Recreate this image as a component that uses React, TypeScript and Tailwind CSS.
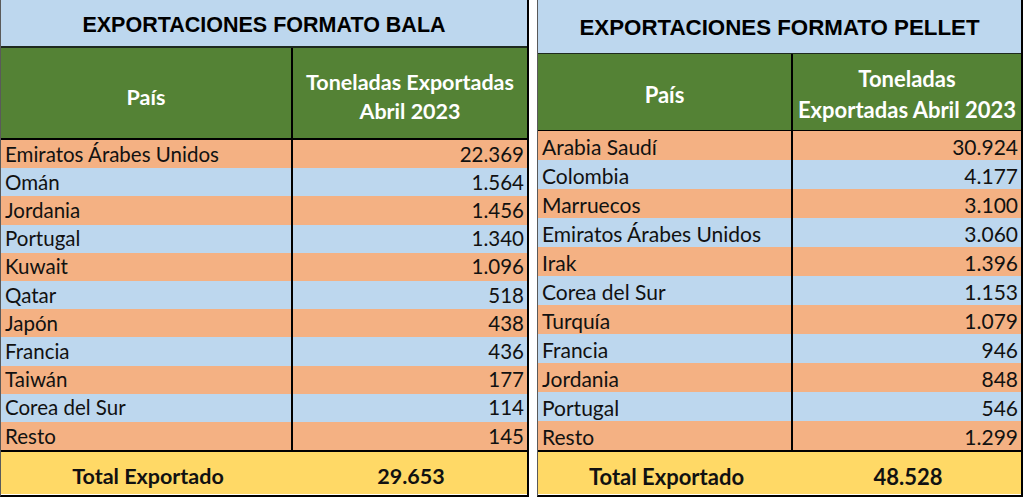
import React from "react";

type Row = [string, string];

const bala: Row[] = [
  ["Emiratos Árabes Unidos", "22.369"],
  ["Omán", "1.564"],
  ["Jordania", "1.456"],
  ["Portugal", "1.340"],
  ["Kuwait", "1.096"],
  ["Qatar", "518"],
  ["Japón", "438"],
  ["Francia", "436"],
  ["Taiwán", "177"],
  ["Corea del Sur", "114"],
  ["Resto", "145"],
];

const pellet: Row[] = [
  ["Arabia Saudí", "30.924"],
  ["Colombia", "4.177"],
  ["Marruecos", "3.100"],
  ["Emiratos Árabes Unidos", "3.060"],
  ["Irak", "1.396"],
  ["Corea del Sur", "1.153"],
  ["Turquía", "1.079"],
  ["Francia", "946"],
  ["Jordania", "848"],
  ["Portugal", "546"],
  ["Resto", "1.299"],
];

const cal = { fontFamily: "Lato, 'Open Sans', sans-serif" };
const arial = { fontFamily: "'Liberation Sans', Arial, sans-serif" };

function LeftTable() {
  return (
    <div className="flex w-[529px] flex-col border-l border-r-2 border-b-2 border-l-[#5a5a5a] border-r-black border-b-black" style={cal}>
      <div className="flex h-[48px] items-center justify-center border-b-2 border-[#1e2a1e] bg-[#BDD7EE] pt-[5px]">
        <span className="text-[21.5px] font-bold text-black" style={arial}>EXPORTACIONES FORMATO BALA</span>
      </div>
      <div className="flex h-[92px] border-b-2 border-black bg-[#548235] text-[21.5px] font-bold leading-[29px] text-white">
        <div className="flex w-[292px] items-center justify-center border-r-2 border-black pt-[8px]">País</div>
        <div className="flex flex-1 flex-col items-center justify-center pt-[8px]">
          <span>Toneladas Exportadas</span>
          <span>Abril 2023</span>
        </div>
      </div>
      <div className="flex h-[310px] flex-col">
        {bala.map(([p, v], i) => (
          <div key={p} className={`flex flex-1 text-[20.5px] leading-none text-[#111] ${i % 2 === 0 ? "bg-[#F4B183]" : "bg-[#BDD7EE]"}`}>
            <div className="flex w-[292px] items-end border-r-2 border-black pb-[4px] pl-[4px]">{p}</div>
            <div className="flex flex-1 items-end justify-end pb-[4px] pr-[3px]">{v}</div>
          </div>
        ))}
      </div>
      <div className="flex h-[44px] border-t-2 border-black bg-[#FFD966] text-[21.5px] font-bold text-[#111]">
        <div className="flex w-[294px] items-center justify-center pt-[7px]">Total Exportado</div>
        <div className="flex flex-1 items-center justify-center pt-[7px]">29.653</div>
      </div>
    </div>
  );
}

function RightTable() {
  return (
    <div className="flex w-[486px] flex-col border-l border-r-2 border-b-2 border-l-[#5a5a5a] border-r-black border-b-black" style={cal}>
      <div className="flex h-[54px] items-center justify-center border-b border-[#1e2a1e] bg-[#BDD7EE] pt-[3px]">
        <span className="text-[22.3px] font-bold text-black" style={arial}>EXPORTACIONES FORMATO PELLET</span>
      </div>
      <div className="flex h-[77px] border-b border-black bg-[#548235] text-[22px] font-bold leading-[31px] text-white">
        <div className="flex w-[255px] items-center justify-center border-r-2 border-black pt-[4px]">País</div>
        <div className="flex flex-1 flex-col items-center justify-center pt-[3px]">
          <span>Toneladas</span>
          <span>Exportadas Abril 2023</span>
        </div>
      </div>
      <div className="flex h-[319px] flex-col">
        {pellet.map(([p, v], i) => (
          <div key={p} className={`flex flex-1 text-[21px] leading-none text-[#111] ${i % 2 === 0 ? "bg-[#F4B183]" : "bg-[#BDD7EE]"}`}>
            <div className="flex w-[255px] items-end border-r-2 border-black pb-[3px] pl-[4px]">{p}</div>
            <div className="flex flex-1 items-end justify-end pb-[3px] pr-[3px]">{v}</div>
          </div>
        ))}
      </div>
      <div className="flex h-[44px] border-t-2 border-black bg-[#FFD966] text-[22px] font-bold text-[#111]">
        <div className="flex w-[257px] items-center justify-center pt-[7px]">Total Exportado</div>
        <div className="flex flex-1 items-center justify-center pt-[7px]">48.528</div>
      </div>
    </div>
  );
}

export default function App() {
  return (
    <div className="flex h-[497px] w-[1024px] gap-[8px] bg-white">
      <LeftTable />
      <RightTable />
    </div>
  );
}
